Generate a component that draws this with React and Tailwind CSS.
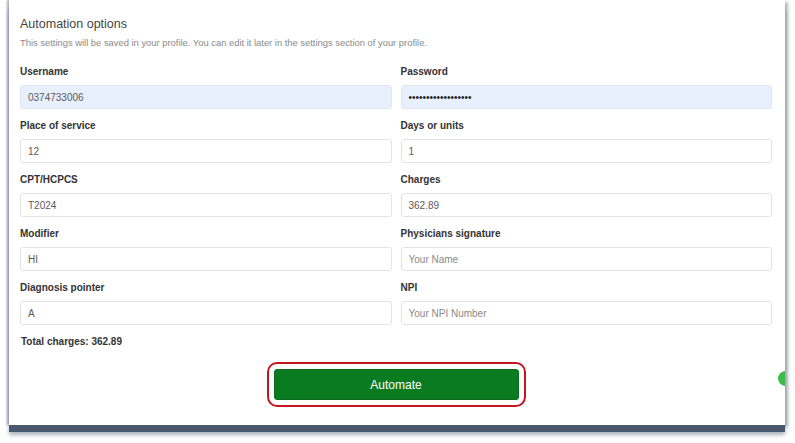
import React from "react";

const fields = [
  { label: "Username", value: "0374733006", filled: true },
  { label: "Password", value: "••••••••••••••••••", filled: true, dots: true },
  { label: "Place of service", value: "12" },
  { label: "Days or units", value: "1" },
  { label: "CPT/HCPCS", value: "T2024" },
  { label: "Charges", value: "362.89" },
  { label: "Modifier", value: "HI" },
  { label: "Physicians signature", placeholder: "Your Name" },
  { label: "Diagnosis pointer", value: "A" },
  { label: "NPI", placeholder: "Your NPI Number" },
];

function Field({ label, value, placeholder, filled, dots }) {
  return (
    <div className="pt-[10px]">
      <div className="text-[10px] leading-[14px] font-bold text-[#333] mb-[6px]">{label}</div>
      <div
        className={
          "h-[24px] rounded-[3px] border px-[7px] flex items-center text-[10px] " +
          (filled ? "bg-[#e8f0fe] border-[#dfe6f2]" : "bg-white border-[#e3e3e3]")
        }
      >
        {value ? (
          <span className={dots ? "text-[#222] text-[10px]" : "text-[#5a5a5a]"}>{value}</span>
        ) : (
          <span className="text-[#8a8a8a]">{placeholder}</span>
        )}
      </div>
    </div>
  );
}

export default function App() {
  return (
    <div className="w-[795px] h-[443px] bg-white overflow-hidden pl-[9px]" style={{ fontFamily: '"Liberation Sans", Arial, sans-serif' }}>
      <div className="relative w-[776px] h-[425px] bg-white overflow-hidden pl-[11px] pr-[13px] pt-[16px] shadow-[0_7px_0_0_#4b5970,0_10px_4px_0_rgba(75,89,112,0.45),-2px_0_2px_0_rgba(110,120,140,0.6),3px_2px_3px_0_rgba(90,100,120,0.45)]">
        <h2 className="text-[12.5px] leading-[16px] text-[#444]">Automation options</h2>
        <p className="mt-[5px] text-[9.4px] leading-[12px] text-[#8a8a8a]">
          This settings will be saved in your profile. You can edit it later in the settings section of your profile.
        </p>
        <div className="mt-[6px] grid grid-cols-2 gap-x-[9px]">
          {fields.map((f) => (
            <Field key={f.label} {...f} />
          ))}
        </div>
        <div className="mt-[10px] pl-[1px] text-[10px] leading-[14px] font-bold text-[#333]">Total charges: 362.89</div>
        <div className="mt-[13px] flex justify-center">
          <div className="border-2 border-[#c4161f] rounded-[10px] p-[5px]">
            <button className="w-[245px] h-[31px] rounded-[3px] bg-[#0b7b22] text-white text-[12px] border border-[#0a6d1d]">
              Automate
            </button>
          </div>
        </div>
        <div className="absolute right-[-8px] top-[371px] w-[15px] h-[15px] rounded-full bg-[#3dbb4b]" />
      </div>
    </div>
  );
}
